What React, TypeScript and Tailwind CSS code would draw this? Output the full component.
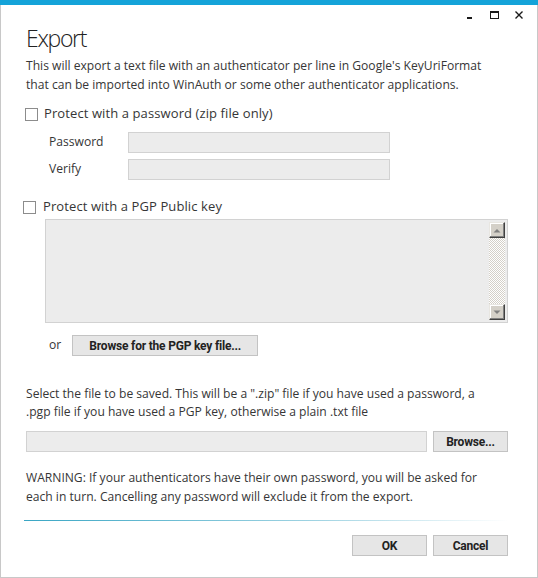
import type { ReactNode } from "react";

function Checkbox() {
  return <div className="w-[13px] h-[13px] border border-[#8c8c8c] bg-white shrink-0" />;
}

function Field({ className }: { className: string }) {
  return <div className={`h-[21px] bg-[#ececec] border border-[#d2d2d2] ${className}`} />;
}

function Button({ children, className }: { children: ReactNode; className: string }) {
  return (
    <div
      className={`h-[21px] flex items-center justify-center bg-[#e6e6e6] border border-[#c3c3c3] font-['Roboto',sans-serif] text-[12px] font-bold tracking-[-0.2px] text-[#222] ${className}`}
    >
      {children}
    </div>
  );
}

function ScrollButton({ up }: { up?: boolean }) {
  return (
    <div className="w-[16px] h-[16px] bg-[#d4d0c8] border border-t-[#e8e6e1] border-l-[#e8e6e1] border-b-[#404040] border-r-[#404040] shadow-[inset_-1px_-1px_#808080,inset_1px_1px_#ffffff] flex items-center justify-center">
      <svg width="8" height="5" viewBox="0 0 8 5">
        {up ? (
          <path d="M0.5 4.5 L4 1 L7.5 4.5 Z" fill="#808080" />
        ) : (
          <path d="M0.5 0.5 L4 4 L7.5 0.5 Z" fill="#808080" />
        )}
      </svg>
    </div>
  );
}

export default function App() {
  return (
    <div className="w-[538px] h-[578px] flex flex-col bg-white text-[#363636] font-['Open_Sans',sans-serif] text-[12.1px]">
      <div className="h-[5px] bg-[#14a3d9] shrink-0" />
      <div className="flex-1 flex flex-col border-x border-b border-[#c8c8c8]">
        {/* window controls */}
        <div className="h-[17px] flex justify-end items-start pr-[12px] pt-[5px]">
          <svg width="60" height="12" viewBox="0 0 60 12" className="block">
            <rect x="2" y="7" width="5" height="2" fill="#1a1a1a" />
            <rect x="25.5" y="1.5" width="8" height="7" fill="none" stroke="#1a1a1a" strokeWidth="1" />
            <rect x="25" y="1" width="9" height="2" fill="#1a1a1a" />
            <path d="M50.5 1.5 L57.5 8.5 M57.5 1.5 L50.5 8.5" stroke="#1a1a1a" strokeWidth="1.4" />
          </svg>
        </div>

        <div className="flex flex-col pl-[25px] pr-[29px]">
          <div className="h-[32px] leading-[32px] text-[23px] font-light text-[#222] tracking-[-1.3px]">Export</div>

          <div className="mt-[2px] leading-[19px] whitespace-nowrap">
            This will export a text file with an authenticator per line in Google's KeyUriFormat
            <br />
            that can be imported into WinAuth or some other authenticator applications.
          </div>

          <div className="mt-[10px] h-[20px] flex items-center -ml-[1px] gap-[6px] text-[13px] tracking-[0.1px]">
            <Checkbox />
            <span>Protect with a password (zip file only)</span>
          </div>

          <div className="mt-[8px] flex items-center pl-[23px]">
            <span className="w-[79px]">Password</span>
            <Field className="w-[262px]" />
          </div>
          <div className="mt-[6px] flex items-center pl-[23px]">
            <span className="w-[79px]">Verify</span>
            <Field className="w-[262px]" />
          </div>

          <div className="mt-[17px] h-[20px] flex items-center -ml-[3px] gap-[7px] text-[13px] tracking-[0.1px]">
            <Checkbox />
            <span>Protect with a PGP Public key</span>
          </div>

          <div className="mt-[2px] ml-[19px] h-[104px] bg-[#ececec] border border-[#d2d2d2] flex justify-end pt-[2px] pr-[2px] pb-[2px]">
            <div className="w-[16px] flex flex-col">
              <ScrollButton up />
              <div className="flex-1 bg-[repeating-conic-gradient(#d4d0c8_0%_25%,#ffffff_0%_50%)] bg-[length:2px_2px]" />
              <ScrollButton />
            </div>
          </div>

          <div className="mt-[12px] flex items-center pl-[23px] gap-[11px]">
            <span>or</span>
            <Button className="w-[186px]">Browse for the PGP key file...</Button>
          </div>

          <div className="mt-[29px] leading-[18px] whitespace-nowrap">
            Select the file to be saved. This will be a ".zip" file if you have used a password, a
            <br />
            .pgp file if you have used a PGP key, otherwise a plain .txt file
          </div>

          <div className="mt-[10px] flex items-center gap-[6px]">
            <Field className="flex-1" />
            <Button className="w-[75px]">Browse...</Button>
          </div>

          <div className="mt-[16px] leading-[19px] whitespace-nowrap">
            WARNING: If your authenticators have their own password, you will be asked for
            <br />
            each in turn. Cancelling any password will exclude it from the export.
          </div>

          <div className="mt-[14px] -ml-[2px] h-[1px] bg-[linear-gradient(to_right,#3aa6c4,#9fd3e2_60%,#ffffff)]" />

          <div className="mt-[14px] flex justify-end gap-[6px]">
            <Button className="w-[75px]">OK</Button>
            <Button className="w-[75px]">Cancel</Button>
          </div>
        </div>
      </div>
    </div>
  );
}
